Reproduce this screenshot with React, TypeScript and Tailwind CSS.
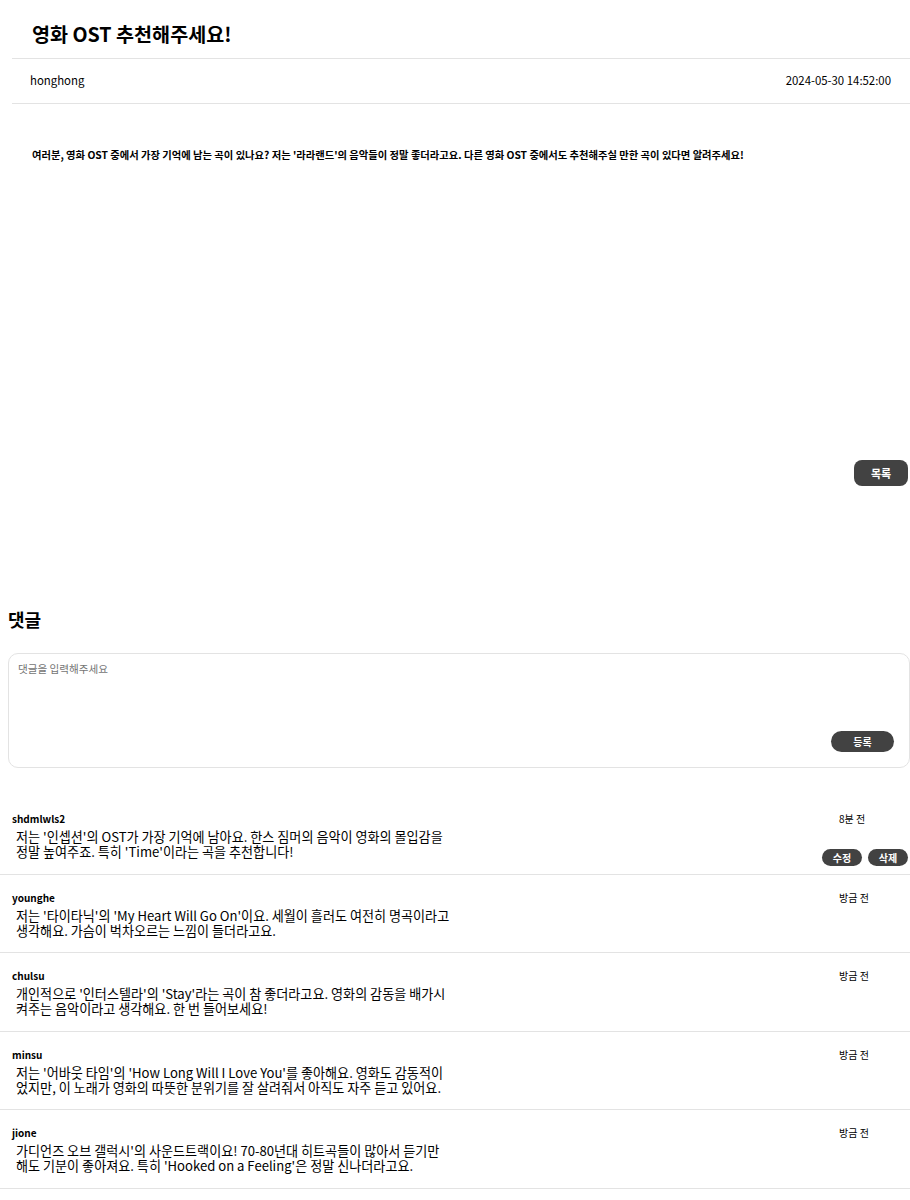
const comments = [
  {
    user: 'shdmlwls2',
    time: '8분 전',
    text: "저는 '인셉션'의 OST가 가장 기억에 남아요. 한스 짐머의 음악이 영화의 몰입감을 정말 높여주죠. 특히 'Time'이라는 곡을 추천합니다!",
    mine: true,
  },
  {
    user: 'younghe',
    time: '방금 전',
    text: "저는 '타이타닉'의 'My Heart Will Go On'이요. 세월이 흘러도 여전히 명곡이라고 생각해요. 가슴이 벅차오르는 느낌이 들더라고요.",
  },
  {
    user: 'chulsu',
    time: '방금 전',
    text: "개인적으로 '인터스텔라'의 'Stay'라는 곡이 참 좋더라고요. 영화의 감동을 배가시켜주는 음악이라고 생각해요. 한 번 들어보세요!",
  },
  {
    user: 'minsu',
    time: '방금 전',
    text: "저는 '어바웃 타임'의 'How Long Will I Love You'를 좋아해요. 영화도 감동적이었지만, 이 노래가 영화의 따뜻한 분위기를 잘 살려줘서 아직도 자주 듣고 있어요.",
  },
  {
    user: 'jione',
    time: '방금 전',
    text: "가디언즈 오브 갤럭시'의 사운드트랙이요! 70-80년대 히트곡들이 많아서 듣기만 해도 기분이 좋아져요. 특히 'Hooked on a Feeling'은 정말 신나더라고요.",
  },
];

export default function App() {
  return (
    <div className="min-h-screen bg-white text-black font-['Noto_Sans_CJK_KR',sans-serif]">
      <div className="pl-[12px]">
        <h1 className="px-[20px] pt-[21px] pb-[11px] text-[19.6px] font-bold leading-[26px]">영화 OST 추천해주세요!</h1>
        <div className="flex justify-between items-center h-[46px] border-y border-[#e3e3e3] pl-[18px] pr-[19px] text-[11.4px]">
          <span>honghong</span>
          <span>2024-05-30 14:52:00</span>
        </div>
        <p className="px-[20px] pt-[44px] text-[10.3px] font-bold leading-[14px]">
          여러분, 영화 OST 중에서 가장 기억에 남는 곡이 있나요? 저는 '라라랜드'의 음악들이 정말 좋더라고요. 다른 영화 OST 중에서도 추천해주실 만한 곡이 있다면 알려주세요!
        </p>
      </div>

      <div className="flex justify-end pr-[2px] mt-[298px]">
        <button className="w-[54px] h-[26px] rounded-[8px] bg-[#424242] text-white text-[11px] font-bold">목록</button>
      </div>

      <div className="pl-[8px] mt-[121px]">
        <h2 className="text-[18px] font-bold leading-[24px]">댓글</h2>
        <div className="mt-[22px] h-[115px] border border-[#e3e3e3] rounded-[10px] flex flex-col justify-between px-[9px] pt-[7px] pb-[15px]">
          <span className="text-[10.6px] text-[#757575]">댓글을 입력해주세요</span>
          <div className="flex justify-end pr-[6px]">
            <button className="w-[63px] h-[21px] rounded-full bg-[#424242] text-white text-[10px] font-bold">등록</button>
          </div>
        </div>
      </div>

      <div className="mt-[28px]">
        {comments.map((c, i) => (
          <div key={i} className="flex h-[78.5px] border-b border-[#e3e3e3] pl-[12px] pr-[2px] pt-[16px]">
            <div className="flex-1">
              <div className="text-[10px] font-bold leading-[14px]">{c.user}</div>
              <p className="w-[439px] pl-[4px] mt-[3px] text-[13.1px] leading-[15px]">{c.text}</p>
            </div>
            <div className="flex flex-col items-end">
              <div className="w-[86px] pl-[17px] text-left text-[10px] leading-[14px]">{c.time}</div>
              {c.mine && (
                <div className="flex gap-[6px] mt-[23px]">
                  <button className="w-[40px] h-[17px] rounded-full bg-[#424242] text-white text-[10px] font-bold">수정</button>
                  <button className="w-[40px] h-[17px] rounded-full bg-[#424242] text-white text-[10px] font-bold">삭제</button>
                </div>
              )}
            </div>
          </div>
        ))}
      </div>
    </div>
  );
}
